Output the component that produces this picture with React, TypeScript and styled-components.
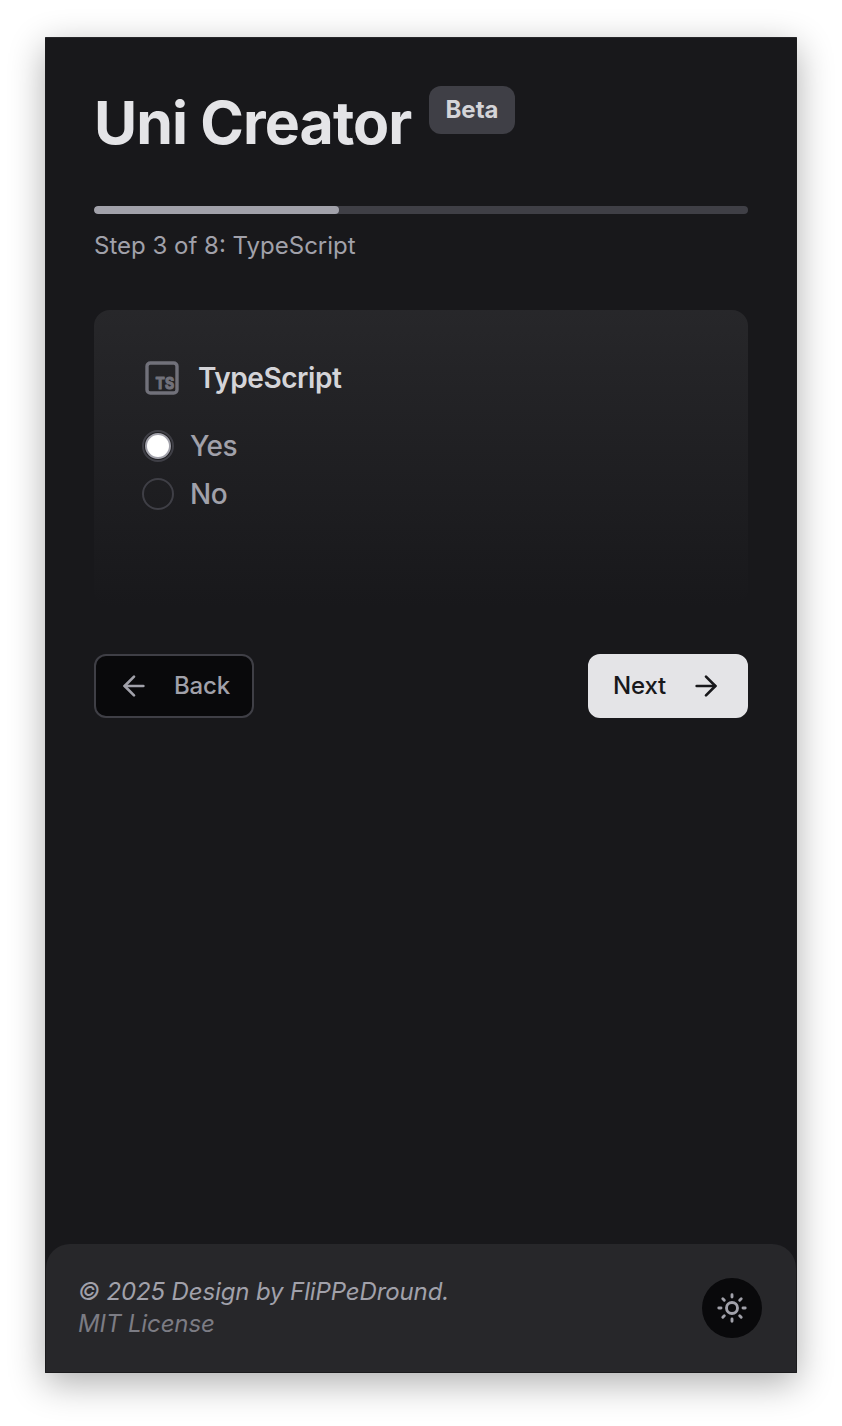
import React, { useState } from "react";
import styled, { createGlobalStyle } from "styled-components";
import { ArrowLeft, ArrowRight } from "lucide-react";

const GlobalStyle = createGlobalStyle`
  *, *::before, *::after { box-sizing: border-box; }
  body {
    margin: 0;
    background: #ffffff;
    font-family: Inter, "Liberation Sans", sans-serif;
    -webkit-font-smoothing: antialiased;
  }
`;

const Page = styled.div`
  height: 1426px;
  padding: 37px 45px 53px;
  overflow: hidden;
`;

const Frame = styled.main`
  display: flex;
  flex-direction: column;
  justify-content: space-between;
  height: 1336px;
  border: 1px solid #1b1b1d;
  border-top-color: #27272a;
  border-radius: 1px;
  background: #18181b;
  box-shadow: 0 10px 36px rgba(0, 0, 0, 0.32);
`;

const Content = styled.section`
  padding: 48px;
`;

const Header = styled.header`
  display: flex;
  align-items: flex-start;
  height: 72px;
`;

const Title = styled.h1`
  margin: 0;
  width: 335px;
  color: #e4e4e7;
  font-size: 59px;
  line-height: 73px;
  font-weight: 700;
  letter-spacing: -0.9px;
  white-space: nowrap;
`;

const Badge = styled.span`
  width: 86px;
  height: 48px;
  border-radius: 12px;
  background: #3f3f46;
  color: #d4d4d8;
  font-size: 24px;
  line-height: 47px;
  font-weight: 700;
  text-align: center;
`;

const Track = styled.div`
  height: 8px;
  margin-top: 48px;
  border-radius: 4px;
  background: #3f3f46;
  overflow: hidden;
`;

const Progress = styled.div`
  height: 8px;
  border-radius: 4px;
  background: #a1a1aa;
`;

const StepText = styled.p`
  margin: 16px 0 0;
  color: #a1a1aa;
  font-size: 24px;
  line-height: 32px;
`;

const Card = styled.div`
  height: 296px;
  margin-top: 48px;
  padding: 48px;
  border-radius: 16px;
  background: linear-gradient(to bottom, #27272a, #18181b);
`;

const CardHeading = styled.div`
  display: flex;
  align-items: center;
  gap: 16px;
  height: 40px;
  margin-bottom: 32px;
`;

const CardTitle = styled.h2`
  margin: 0;
  color: #d4d4d8;
  font-size: 28px;
  line-height: 40px;
  font-weight: 600;
  letter-spacing: -0.45px;
`;

const Options = styled.div`
  display: grid;
  gap: 16px;
`;

const Option = styled.label`
  display: flex;
  align-items: center;
  gap: 16px;
  height: 32px;
  color: #a1a1aa;
  font-size: 28px;
  line-height: 32px;
  font-weight: 550;
  letter-spacing: -0.55px;
`;

const Radio = styled.input`
  appearance: none;
  display: flex;
  align-items: center;
  justify-content: center;
  width: 32px;
  height: 32px;
  margin: 0;
  border: 2px solid #3f3f46;
  border-radius: 50%;

  &:checked::before {
    content: "";
    flex: none;
    width: 26px;
    height: 26px;
    border: 2px solid #a1a1aa;
    border-radius: 50%;
    background: #ffffff;
  }
`;

const Actions = styled.nav`
  display: flex;
  justify-content: space-between;
  margin-top: 48px;
`;

const Button = styled.button<{ $primary?: boolean }>`
  display: flex;
  align-items: center;
  justify-content: space-between;
  width: 160px;
  height: 64px;
  padding: ${(p) => (p.$primary ? "0 24px 0 23px" : "0 22px")};
  border: 2px solid ${(p) => (p.$primary ? "#e4e4e7" : "#3f3f46")};
  border-radius: 12px;
  background: ${(p) => (p.$primary ? "#e4e4e7" : "#09090b")};
  color: ${(p) => (p.$primary ? "#18181b" : "#a1a1aa")};
  font: 550 24px/32px Inter, "Liberation Sans", sans-serif;
  letter-spacing: -0.15px;
`;

const Footer = styled.footer`
  display: flex;
  align-items: center;
  justify-content: space-between;
  height: 128px;
  padding: 0 34px 0 32px;
  border-radius: 24px 24px 0 0;
  background: #27272a;
`;

const Credits = styled.div`
  color: #a1a1aa;
  font-size: 24px;
  line-height: 32px;
  font-style: italic;
  letter-spacing: -0.12px;
`;

const License = styled.div`
  color: #7c7c84;
`;

const ThemeButton = styled.button`
  display: grid;
  place-items: center;
  width: 60px;
  height: 60px;
  padding: 0;
  border: 0;
  border-radius: 50%;
  background: #09090b;
  color: #a1a1aa;
`;

const TypeScriptIcon = () => (
  <svg width="40" height="40" viewBox="0 0 40 40" fill="none">
    <rect x="5" y="5" width="30" height="30" rx="3.3" stroke="#71717a" strokeWidth="3.4" />
    <text
      x="13.6"
      y="31"
      fill="#71717a"
      stroke="#71717a"
      strokeWidth="1.2"
      strokeLinejoin="round"
      fontFamily="Inter, sans-serif"
      fontSize="16"
      fontWeight="700"
      textLength="18.4"
      lengthAdjust="spacingAndGlyphs"
    >
      TS
    </text>
  </svg>
);

const SunIcon = () => (
  <svg width="32" height="32" viewBox="0 0 32 32" fill="none" stroke="currentColor" strokeWidth="2.9" strokeLinecap="round">
    <circle cx="16" cy="16" r="5.5" />
    <path d="M16 2.8v2.2M16 27v2.2M2.8 16h2.2M27 16h2.2M6.8 6.8l1.5 1.5M23.7 23.7l1.5 1.5M6.8 25.2l1.5-1.5M23.7 8.3l1.5-1.5" />
  </svg>
);

export default function App() {
  const [choice, setChoice] = useState("Yes");
  return (
    <>
      <GlobalStyle />
      <Page>
        <Frame>
          <Content>
            <Header>
              <Title>Uni Creator</Title>
              <Badge>Beta</Badge>
            </Header>
            <Track>
              <Progress style={{ width: `${(3 / 8) * 100}%` }} />
            </Track>
            <StepText>Step 3 of 8: TypeScript</StepText>
            <Card>
              <CardHeading>
                <TypeScriptIcon />
                <CardTitle>TypeScript</CardTitle>
              </CardHeading>
              <Options>
                {["Yes", "No"].map((name) => (
                  <Option key={name}>
                    <Radio type="radio" name="typescript" checked={choice === name} onChange={() => setChoice(name)} />
                    {name}
                  </Option>
                ))}
              </Options>
            </Card>
            <Actions>
              <Button>
                <ArrowLeft size={32} strokeWidth={2} />
                Back
              </Button>
              <Button $primary>
                Next
                <ArrowRight size={32} strokeWidth={2} />
              </Button>
            </Actions>
          </Content>
          <Footer>
            <Credits>
              © 2025 Design by FliPPeDround.
              <License>MIT License</License>
            </Credits>
            <ThemeButton aria-label="Toggle theme">
              <SunIcon />
            </ThemeButton>
          </Footer>
        </Frame>
      </Page>
    </>
  );
}
